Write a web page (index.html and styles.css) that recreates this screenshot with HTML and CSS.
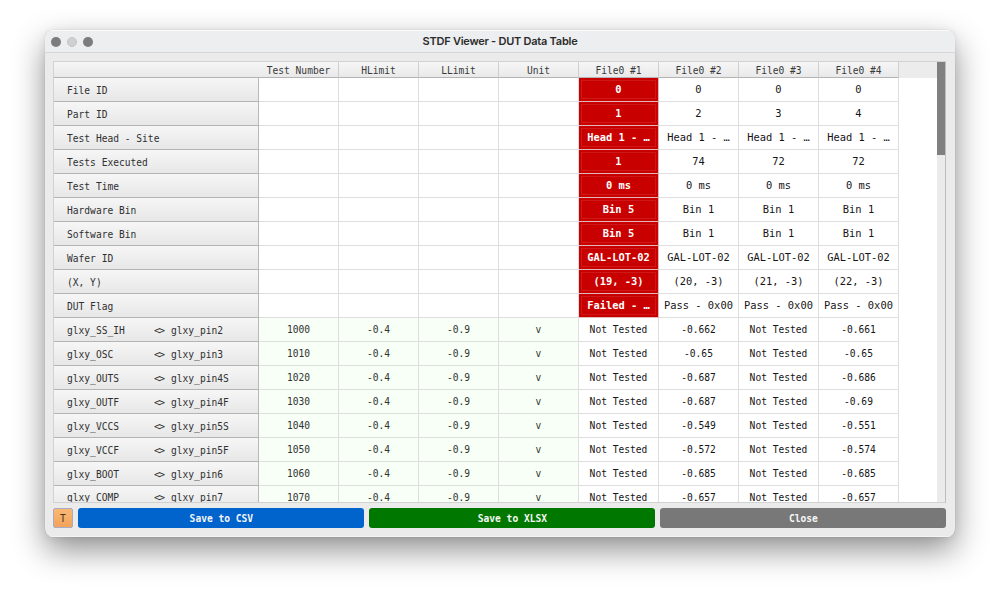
FILE: index.html
```html
<!DOCTYPE html>
<html lang="en">
<head>
<meta charset="utf-8">
<title>STDF Viewer - DUT Data Table</title>
<link rel="stylesheet" href="styles.css">
</head>
<body>
<main class="window">
  <header class="titlebar">
    <div class="lights"><i></i><i class="dim"></i><i></i></div>
    <h1>STDF Viewer - DUT Data Table</h1>
  </header>
  <section class="content">
    <div class="frame">
      <div class="grid" id="grid"></div>
      <div class="blank"></div>
      <div class="scrollbar"><div class="thumb"></div></div>
    </div>
    <footer class="actions">
      <button class="font-btn">T</button>
      <button class="btn csv">Save to CSV</button>
      <button class="btn xlsx">Save to XLSX</button>
      <button class="btn close">Close</button>
    </footer>
  </section>
</main>
<script src="table.js"></script>
</body>
</html>
```
FILE: styles.css
```css
* { box-sizing: border-box; }
body {
  margin: 0;
  height: 596px;
  padding: 30px 45px 59px;
  overflow: hidden;
  background: #fff;
  font-family: "DejaVu Sans Mono", monospace;
  font-size: 9.6px;
  color: #222;
}
.window {
  height: 507px;
  display: flex;
  flex-direction: column;
  border-radius: 8px;
  overflow: hidden;
  background: #ebebeb;
  box-shadow: 0 0 1px rgba(0,0,0,.3), 0 13px 32px rgba(0,0,0,.44), 0 1px 10px rgba(0,0,0,.06);
}
.titlebar {
  flex: none;
  height: 23px;
  display: grid;
  grid-template-columns: 60px 1fr 60px;
  align-items: center;
  background: #eceef0;
  border-top: 1px solid #fafafa;
  border-bottom: 1px solid #d6d6d6;
}
.titlebar h1 {
  margin: 0;
  padding-bottom: 1px;
  text-align: center;
  font: 600 11px/19px Inter, sans-serif;
  letter-spacing: -.25px;
  color: #2b2b2b;
}
.lights { display: flex; gap: 6px; padding-left: 6px; }
.lights i { width: 10px; height: 10px; border-radius: 50%; background: #7b7c7d; }
.lights .dim { background: #cfd0d1; border: 1px solid #c3c4c5; }
.content { flex: 1; padding: 8px 9px 8px 8px; border: solid #f4f4f4; border-width: 0 0 1px; }
.frame {
  height: 442px;
  display: flex;
  overflow: hidden;
  border: 1px solid #d2d2d2;
  border-right-color: #bdbdbd;
  background: #fff;
}
.grid { width: 845px; flex: none; }
.row {
  display: grid;
  grid-template-columns: 205px repeat(8, 80px);
  height: 24px;
}
.row.head { height: 16px; color: #3a3a3a; }
.row > div { white-space: pre; overflow: hidden; text-align: center; }
.head > div {
  line-height: 17px;
  background: linear-gradient(#f6f6f6, #e9e9e9);
  border-right: 1px solid #cfcfcf;
  border-bottom: 1px solid #b4b4b4;
}
.head > .corner { border-right: 0; }
.row > .label {
  display: flex;
  text-align: left;
  padding-left: 13px;
  line-height: 25px;
  color: #303030;
  background: linear-gradient(#f6f6f6, #e7e7e7);
  border-right: 1px solid #b8b8b8;
  border-bottom: 1px solid #b4b4b4;
}
.row:last-child > .label { line-height: 23px; }
.label .name { width: 87px; }
.label .link { width: 17px; letter-spacing: -1.4px; font-size: 10.4px; }
.cell {
  line-height: 23px;
  color: #151515;
  border-right: 1px solid #dedede;
  border-bottom: 1px solid #dedede;
}
.info .cell { font-size: 10.4px; }
.cell.limit { background: #f8fff6; color: #333; }
.row > .cell.fail {
  line-height: 21px;
  padding-top: 1px;
  color: #fff;
  font-weight: bold;
  background: #c80000;
  border: 1px solid #e2b9b9;
  border-width: 0 1px 1px 0;
  box-shadow: inset 0 0 0 2px #c80000, inset 0 0 0 3px #ce1717;
}
.blank { flex: 1; background: linear-gradient(#ececec 16px, #fff 16px); }
.scrollbar { width: 8px; background: #ebebeb; }
.thumb { height: 93px; background: #808080; }
.actions {
  display: grid;
  grid-template-columns: 20.4px repeat(3, 286px);
  column-gap: 5px;
  height: 20px;
  margin-top: 5px;
}
.actions button { padding: 1px 0 0; border: 0; height: 20px; font: bold 9.6px/20px "DejaVu Sans Mono", monospace; color: #f6f6f6; }
.actions .btn { border-radius: 3px; }
.csv { background: #0064cc; }
.xlsx { background: #007800; }
.close { background: #787878; }
.actions .font-btn {
  width: 20px;
  border: 1px solid #a9abc4;
  border-radius: 2px;
  background: linear-gradient(#fab873, #f2a35c);
  color: #4a321c;
  font-weight: normal;
  line-height: 18px;
}
```
FILE: table.js
```js
const heads = ["", "Test Number", "HLimit", "LLimit", "Unit", "File0 #1", "File0 #2", "File0 #3", "File0 #4"];
const info = [
  ["File ID", "0", "0", "0", "0"],
  ["Part ID", "1", "2", "3", "4"],
  ["Test Head - Site", "Head 1 - …", "Head 1 - …", "Head 1 - …", "Head 1 - …"],
  ["Tests Executed", "1", "74", "72", "72"],
  ["Test Time", "0 ms", "0 ms", "0 ms", "0 ms"],
  ["Hardware Bin", "Bin 5", "Bin 1", "Bin 1", "Bin 1"],
  ["Software Bin", "Bin 5", "Bin 1", "Bin 1", "Bin 1"],
  ["Wafer ID", "GAL-LOT-02", "GAL-LOT-02", "GAL-LOT-02", "GAL-LOT-02"],
  ["(X, Y)", "(19, -3)", "(20, -3)", "(21, -3)", "(22, -3)"],
  ["DUT Flag", "Failed - …", "Pass - 0x00", "Pass - 0x00", "Pass - 0x00"]
];
const tests = [
  ["glxy_SS_IH", "glxy_pin2", "1000", "-0.662", "-0.661"],
  ["glxy_OSC", "glxy_pin3", "1010", "-0.65", "-0.65"],
  ["glxy_OUTS", "glxy_pin4S", "1020", "-0.687", "-0.686"],
  ["glxy_OUTF", "glxy_pin4F", "1030", "-0.687", "-0.69"],
  ["glxy_VCCS", "glxy_pin5S", "1040", "-0.549", "-0.551"],
  ["glxy_VCCF", "glxy_pin5F", "1050", "-0.572", "-0.574"],
  ["glxy_BOOT", "glxy_pin6", "1060", "-0.685", "-0.685"],
  ["glxy_COMP", "glxy_pin7", "1070", "-0.657", "-0.657"]
];
const div = (cls, html) => `<div class="${cls}">${html}</div>`;
let out = div("row head", heads.map((h, i) => div(i ? "" : "corner", h)).join(""));
for (const [label, ...vals] of info) {
  out += div("row info", div("label", label) + div("cell", "").repeat(4) +
    vals.map((v, i) => div(i ? "cell" : "cell fail", v)).join(""));
}
for (const [name, pin, num, a, b] of tests) {
  const label = `<span class="name">${name}</span><span class="link">&lt;&gt;</span><span>${pin}</span>`;
  out += div("row", div("label", label) +
    [num, "-0.4", "-0.9", "v"].map(v => div("cell limit", v)).join("") +
    ["Not Tested", a, "Not Tested", b].map(v => div("cell", v)).join(""));
}
document.getElementById("grid").innerHTML = out;
```
